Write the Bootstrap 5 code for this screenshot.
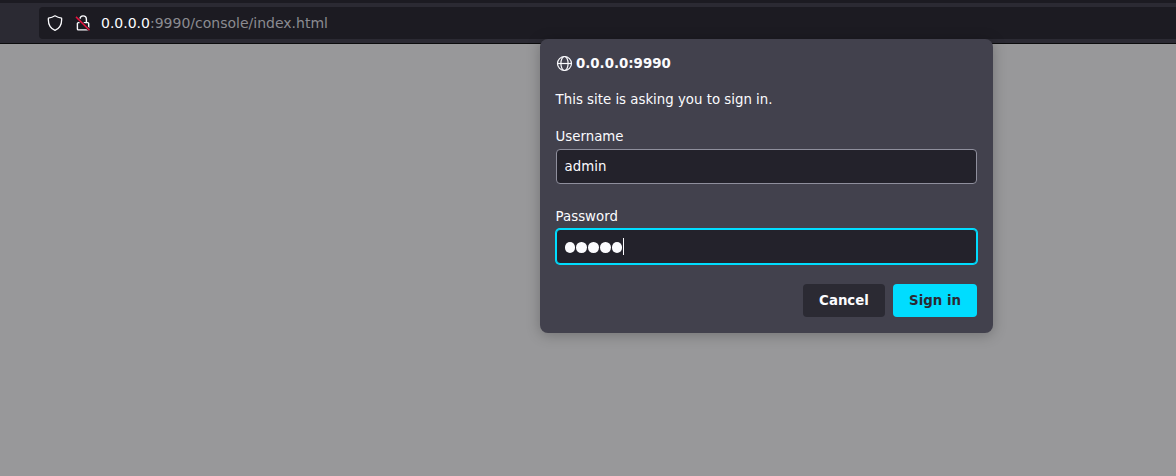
<!DOCTYPE html>
<html lang="en">
<head>
<meta charset="utf-8">
<title>Sign in</title>
<link href="https://cdn.jsdelivr.net/npm/bootstrap@5.3.0/dist/css/bootstrap.min.css" rel="stylesheet">
<style>
  body { background: #98989a; font-family: "DejaVu Sans", sans-serif; font-size: 13.333px; line-height: 16px; color: #fbfbfe; height: 476px; }
  .toolbar { height: 44px; background: #2b2a33; border-top: 3px solid #1c1b22; border-bottom: 1px solid #0c0c0d; padding: 4px 0 4px 39px; }
  .urlbar { height: 32px; background: #1c1b22; border-radius: 4px 0 0 4px; padding-left: 8px; font-size: 14px; }
  .urlbar .path { color: #8b8b91; }
  .urlbar .lock { margin: 0 10px 0 12px; }
  .prompt { left: 540px; top: 39px; width: 453px; height: 294px; background: #42414d; border-radius: 8px; padding: 16px; color: inherit; box-shadow: 0 2px 14px rgba(0,0,0,.25); }
  .site { gap: 3px; margin-bottom: 20px; }
  .message, .prompt label { margin-left: -.4px; }
  .prompt .user-label { margin-top: 21px; margin-bottom: 4px; }
  .prompt .pass-label { margin-top: 25px; margin-bottom: 4px; }
  .prompt .form-control { height: 35px; background: #23222b; border: 1px solid #8f8f9d; border-radius: 4px; color: #fbfbfe; font-size: inherit; line-height: 16px; padding: 0 7.6px; }
  .prompt .form-control.active-field { border-color: #00ddff; box-shadow: 0 0 0 1px #00ddff; }
  .dots { gap: 1px; padding-top: 2px; }
  .dots i { width: 10.75px; height: 11px; border-radius: 50%; background: #fbfbfe; }
  .caret { width: 1px; height: 17px; margin-left: .5px; background: #fbfbfe; }
  .prompt .btn { height: 33px; font-size: inherit; line-height: 16px; font-weight: 700; border: 0; border-radius: 4px; padding: 0; }
  .btn-dark-plain, .btn-dark-plain:hover { width: 82px; background: #2b2a33; color: #fbfbfe; }
  .btn-accent, .btn-accent:hover { width: 84px; background: #00ddff; color: #2b2a33; }
</style>
</head>
<body class="position-relative overflow-hidden">
<nav class="toolbar">
  <div class="urlbar d-flex align-items-center">
    <svg width="16" height="16" viewBox="0 0 16 16" fill="none" stroke="#fbfbfe" stroke-width="1.3" stroke-linejoin="round"><path d="M8 .8C6.2 2 3.700 2.900 1.400 3.200 1 8.600 3.200 13.200 8 15.300c4.800-2.100 7-6.700 6.600-12.100C12.300 2.900 9.800 2 8 .8Z"/></svg>
    <svg class="lock" width="16" height="16" viewBox="0 0 16 16" fill="none" stroke="#fbfbfe" stroke-width="1.400"><path d="M4.700 4.200C5.100 2 6.300.9 8 .9c2 0 3.400 1.500 3.400 3.500v3.200M4.600 5.500v2.100M4.600 7.600H3.400c-.6 0-1 .4-1 1v5.300c0 .6.4 1 1 1h9.300c.6 0 1-.4 1-1V8.600c0-.6-.4-1-1-1H7.500"/><path d="M1.600 2.500 14.500 15" stroke="#1c1b22" stroke-width="3"/><path d="M1 1.900 14.500 15.200" stroke="#e8133f" stroke-width="1.500"/></svg>
    <span>0.0.0.0<span class="path">:9990/console/index.html</span></span>
  </div>
</nav>
<form class="prompt position-absolute d-flex flex-column">
  <div class="site d-flex align-items-center fw-bold">
    <svg width="17" height="17" viewBox="0 0 17 17" fill="none" stroke="#fbfbfe" stroke-width="1.200"><circle cx="8.500" cy="8.500" r="7"/><ellipse cx="8.500" cy="8.500" rx="3.600" ry="7"/><path d="M1.600 8.500h13.800"/></svg>
    <span>0.0.0.0:9990</span>
  </div>
  <div class="message">This site is asking you to sign in.</div>
  <label class="user-label">Username</label>
  <div class="form-control d-flex align-items-center">admin</div>
  <label class="pass-label">Password</label>
  <div class="form-control active-field d-flex align-items-center">
    <span class="dots d-flex"><i></i><i></i><i></i><i></i><i></i></span><span class="caret"></span>
  </div>
  <div class="d-flex justify-content-end gap-2 mt-auto">
    <button type="button" class="btn btn-dark-plain">Cancel</button>
    <button type="button" class="btn btn-accent">Sign in</button>
  </div>
</form>
<script src="https://cdn.jsdelivr.net/npm/bootstrap@5.3.0/dist/js/bootstrap.bundle.min.js"></script>
</body>
</html>
